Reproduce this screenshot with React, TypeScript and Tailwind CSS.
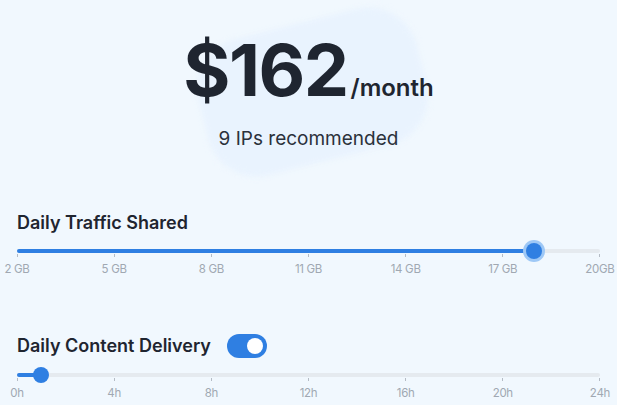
import React from "react";

interface SliderProps {
  labels: string[];
  percent: number;
  halo?: boolean;
}

const Slider = ({ labels, percent, halo }: SliderProps) => {
  return (
    <div className="w-full">
      <div className="relative h-[4px] w-full rounded-full bg-[#e5eaef]">
        <div className="absolute left-0 top-0 h-full rounded-full bg-[#2f7fe2]" style={{ width: `${percent}%` }} />
        <div
          className={`absolute top-1/2 -translate-x-1/2 -translate-y-1/2 rounded-full bg-[#2f7fe2] ${
            halo ? "h-[16px] w-[16px] ring-[3px] ring-[#9ec8f6]" : "h-[16px] w-[16px]"
          }`}
          style={{ left: `${percent}%` }}
        />
      </div>
      <div className="flex justify-between">
        {labels.map((l) => (
          <div key={l} className="flex w-0 flex-col items-center">
            <div className="mt-[1px] h-[3px] w-px bg-[#b5bcc5]" />
            <span className="mt-[7px] whitespace-nowrap text-[11.5px] leading-none tracking-[-0.3px] text-[#a0a8b2]">{l}</span>
          </div>
        ))}
      </div>
    </div>
  );
};

export default function App() {
  return (
    <div
      className="relative h-[405px] w-[617px] overflow-hidden bg-[#f1f8fe] text-[#1f2530]"
      style={{ fontFamily: "Inter, 'Noto Sans', sans-serif" }}
    >
      <div className="absolute left-[200px] top-[22px] h-[140px] w-[225px] rotate-[-14deg] rounded-[50px] bg-[#e9f3fe] blur-[3px]" />
      <div className="relative flex flex-col items-center pt-[34px]">
        <div className="flex items-baseline">
          <span className="text-[72px] font-bold leading-none tracking-[-1.5px]">$162</span>
          <span className="ml-[3px] text-[24px] font-semibold leading-none">/month</span>
        </div>
        <div className="mt-[23px] text-[19px] leading-none text-[#2b313b]">9 IPs recommended</div>
      </div>

      <div className="relative px-[17px] pt-[66px]">
        <div className="text-[18px] font-semibold leading-none">Daily Traffic Shared</div>
        <div className="mt-[17px]">
          <Slider labels={["2 GB", "5 GB", "8 GB", "11 GB", "14 GB", "17 GB", "20GB"]} percent={88.7} halo />
        </div>

        <div className="mt-[58px] flex items-center gap-[16px]">
          <span className="text-[18px] font-semibold leading-none">Daily Content Delivery</span>
          <div className="flex h-[24px] w-[40px] items-center justify-end rounded-full bg-[#2f7fe2] pr-[4px]">
            <div className="h-[16px] w-[16px] rounded-full bg-white" />
          </div>
        </div>
        <div className="mt-[15px]">
          <Slider labels={["0h", "4h", "8h", "12h", "16h", "20h", "24h"]} percent={4.1} />
        </div>
      </div>
    </div>
  );
}
